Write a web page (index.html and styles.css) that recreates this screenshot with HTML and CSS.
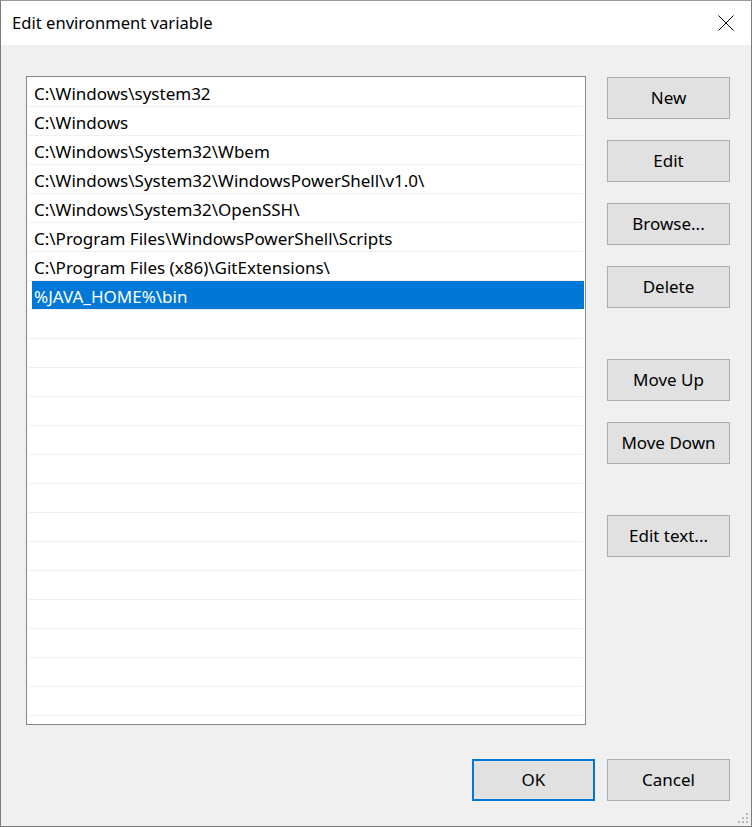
FILE: index.html
```html
<!DOCTYPE html>
<html lang="en">
<head>
    <meta charset="UTF-8">
    <meta name="viewport" content="width=device-width, initial-scale=1.0">
    <title>Edit environment variable</title>
    <link rel="stylesheet" href="styles.css">
</head>
<body>
    <div class="dialog">
        <div class="title-bar">
            <span class="title">Edit environment variable</span>
            <button class="close-button" aria-label="Close">
                <svg width="16" height="16" viewBox="0 0 16 16">
                    <path d="M0.5 0.5 L15.5 15.5 M15.5 0.5 L0.5 15.5" stroke="#000" stroke-width="1" fill="none"/>
                </svg>
            </button>
        </div>

        <div class="content">
            <div class="path-list">
                <div class="row"><span class="cell">C:\Windows\system32</span></div>
                <div class="row"><span class="cell">C:\Windows</span></div>
                <div class="row"><span class="cell">C:\Windows\System32\Wbem</span></div>
                <div class="row"><span class="cell">C:\Windows\System32\WindowsPowerShell\v1.0\</span></div>
                <div class="row"><span class="cell">C:\Windows\System32\OpenSSH\</span></div>
                <div class="row"><span class="cell">C:\Program Files\WindowsPowerShell\Scripts</span></div>
                <div class="row"><span class="cell">C:\Program Files (x86)\GitExtensions\</span></div>
                <div class="row selected"><span class="cell">%JAVA_HOME%\bin</span></div>
                <div class="row"><span class="cell"></span></div>
                <div class="row"><span class="cell"></span></div>
                <div class="row"><span class="cell"></span></div>
                <div class="row"><span class="cell"></span></div>
                <div class="row"><span class="cell"></span></div>
                <div class="row"><span class="cell"></span></div>
                <div class="row"><span class="cell"></span></div>
                <div class="row"><span class="cell"></span></div>
                <div class="row"><span class="cell"></span></div>
                <div class="row"><span class="cell"></span></div>
                <div class="row"><span class="cell"></span></div>
                <div class="row"><span class="cell"></span></div>
                <div class="row"><span class="cell"></span></div>
                <div class="row"><span class="cell"></span></div>
                <div class="row"><span class="cell"></span></div>
            </div>

            <div class="side-buttons">
                <button class="win-button">New</button>
                <button class="win-button">Edit</button>
                <button class="win-button">Browse...</button>
                <button class="win-button">Delete</button>
                <button class="win-button group-start">Move Up</button>
                <button class="win-button">Move Down</button>
                <button class="win-button group-start">Edit text...</button>
            </div>
        </div>

        <div class="footer">
            <button class="win-button default">OK</button>
            <button class="win-button">Cancel</button>
        </div>

        <div class="grip">
            <i style="right: 3px; bottom: 3px"></i>
            <i style="right: 7px; bottom: 3px"></i>
            <i style="right: 11px; bottom: 3px"></i>
            <i style="right: 3px; bottom: 7px"></i>
            <i style="right: 7px; bottom: 7px"></i>
            <i style="right: 3px; bottom: 11px"></i>
        </div>
    </div>
</body>
</html>
```

FILE: styles.css
```css
* {
    box-sizing: border-box;
}

body {
    margin: 0;
    font-family: "Noto Sans", "Open Sans", "Liberation Sans", sans-serif;
    color: #000;
    background-color: #f0f0f0;
}

.dialog {
    position: relative;
    width: 752px;
    height: 827px;
    background-color: #f0f0f0;
    border: 1px solid #7a7a7a;
    border-top-color: #9a9a9a;
    display: flex;
    flex-direction: column;
}

.title-bar {
    height: 44px;
    background-color: #fff;
    display: flex;
    align-items: center;
    justify-content: space-between;
    padding: 0 17px 0 11px;
}

.title {
    font-size: 16.6px;
    padding-bottom: 1px;
}

.close-button {
    border: none;
    background: none;
    padding: 0;
    width: 16px;
    height: 16px;
    display: flex;
}

.content {
    display: flex;
    padding: 31px 21px 0 25px;
    gap: 21px;
}

.path-list {
    width: 560px;
    height: 649px;
    background-color: #fff;
    border: 1px solid #828790;
    padding-top: 1px;
    overflow: hidden;
}

.row {
    height: 29px;
    margin: 0 2px 0 1px;
    border-bottom: 1px solid #f0f0f0;
}

.cell {
    display: block;
    height: 28px;
    margin-left: 4px;
    padding-left: 2px;
    font-size: 17px;
    line-height: 31px;
    white-space: nowrap;
}

.row.selected .cell {
    background-color: #0078d7;
    color: #fff;
    margin-right: -1px;
}

.side-buttons {
    display: flex;
    flex-direction: column;
    gap: 21px;
    padding-top: 1px;
}

.win-button {
    width: 123px;
    height: 42px;
    background-color: #e1e1e1;
    border: 1px solid #adadad;
    font-family: inherit;
    font-size: 17px;
    color: #000;
    padding: 0 0 1px;
}

.side-buttons .group-start {
    margin-top: 30px;
}

.footer {
    display: flex;
    justify-content: flex-end;
    gap: 12px;
    padding: 34px 21px 0 0;
}

.win-button.default {
    width: 123px;
    border: 2px solid #0078d7;
}

.grip i {
    position: absolute;
    width: 2px;
    height: 2px;
    background-color: #b8b8b8;
}
```
